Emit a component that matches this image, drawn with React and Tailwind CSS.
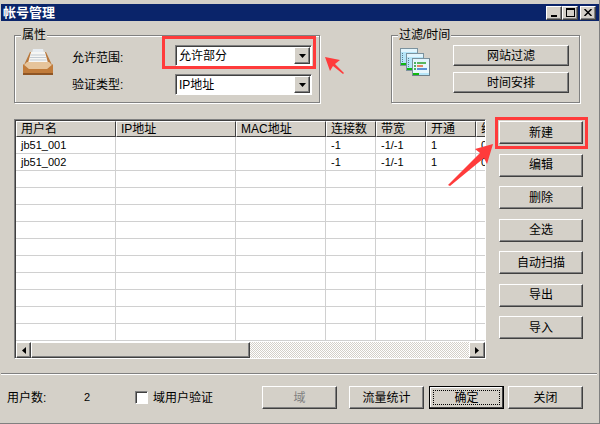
import React from "react";

const font = { fontFamily: '"Liberation Sans", "Noto Sans CJK SC", sans-serif' };

const raised =
  "flex items-center justify-center border border-t-white border-l-white border-r-[#404040] border-b-[#404040] shadow-[inset_-1px_-1px_0_#808080] bg-[#d4d0c8] text-[12px]";
const sunken =
  "border border-t-[#808080] border-l-[#808080] border-r-white border-b-white shadow-[inset_1px_1px_0_#404040]";

const columns = [
  { title: "用户名", width: "w-[100px]" },
  { title: "IP地址", width: "w-[120px]" },
  { title: "MAC地址", width: "w-[90px]" },
  { title: "连接数", width: "w-[50px]" },
  { title: "带宽", width: "w-[50px]" },
  { title: "开通", width: "w-[50px]" },
  { title: "线路", width: "w-[20px]" },
];

const rows = [
  ["jb51_001", "", "", "-1", "-1/-1", "1", "0"],
  ["jb51_002", "", "", "-1", "-1/-1", "1", "0"],
  ...Array.from({ length: 10 }, () => ["", "", "", "", "", "", ""]),
];

const sideButtons = ["新建", "编辑", "删除", "全选", "自动扫描", "导出", "导入"];

function Group({ title, className, children }) {
  return (
    <div className={`relative border border-[#808080] shadow-[1px_1px_0_#fff,inset_1px_1px_0_#fff] ${className}`}>
      <span className="absolute left-[6px] top-[-8px] bg-[#d4d0c8] px-[1px] text-[12px] leading-[15px]">
        {title}
      </span>
      {children}
    </div>
  );
}

function Combo({ value }) {
  return (
    <div className={`flex h-[21px] w-[137px] items-center bg-white pl-[3px] text-[12px] ${sunken}`}>
      <span className="flex-1 leading-none">{value}</span>
      <span className={`${raised} mr-[1px] h-[17px] w-[16px]`}>
        <svg width="7" height="4" viewBox="0 0 7 4">
          <path d="M0 0h7L3.500 4z" fill="#000" />
        </svg>
      </span>
    </div>
  );
}

function WinButton({ children, className }) {
  return <div className={`${raised} h-[14px] w-[16px] ${className}`}>{children}</div>;
}

function InboxIcon() {
  return (
    <svg width="30" height="27" viewBox="0 0 30 27">
      <path d="M1 17 L7 4 H10 L6 15 H24 L20 4 H23 L29 17z" fill="#b9783c" />
      <path d="M10 1 H20 L23 13 H7z" fill="#e8edf2" />
      <path d="M8 4 H22 L25 15 H5z" fill="#f6f6f4" />
      <path d="M7.500 7h15M7 9.500h16M6.500 12h17" stroke="#c3cbd3" />
      <path d="M4 14 H26 L29 17 L24 21 H6 L1 17z" fill="#e6c49b" />
      <path d="M0 16 L6 21 H24 L30 16 V26 H0z" fill="#c17b3a" />
      <path d="M0 25 H30 V27 H0z" fill="#8f5524" />
    </svg>
  );
}

function ListsIcon() {
  return (
    <svg width="30" height="28" viewBox="0 0 30 28">
      {[
        [0, 0],
        [6, 5],
        [12, 10],
      ].map(([x, y]) => (
        <g key={x} transform={`translate(${x} ${y})`}>
          <rect x="0.500" y="0.500" width="17" height="17" fill="#b5e5f8" stroke="#7b929e" />
          <rect x="1" y="1" width="16" height="3" fill="#e2f5fd" />
          <rect x="1" y="15" width="6" height="2" fill="#10b810" />
          <path d="M2.500 5v9" stroke="#5f7f90" strokeDasharray="1 1" />
        </g>
      ))}
      <rect x="13" y="14" width="16" height="11" fill="#e8f7fc" />
      <path d="M14 15h2M14 18h2M14 21h2" stroke="#1a9a30" strokeWidth="1.500" />
      <path d="M17 15h9" stroke="#2aa02a" strokeWidth="1.500" />
      <path d="M17 18h6" stroke="#e06030" strokeWidth="1.500" />
      <path d="M17 21h10" stroke="#2a70c8" strokeWidth="1.500" />
      <path d="M12.500 27.500h17V10.500" fill="none" stroke="#6f7f88" />
    </svg>
  );
}

function ScrollArrow({ dir, className }) {
  return (
    <div className={`${raised} h-[16px] shrink-0 ${className}`}>
      <svg width="4" height="7" viewBox="0 0 4 7">
        <path d={dir === "left" ? "M4 0v7L0 3.500z" : "M0 0v7l4-3.500z"} fill="#000" />
      </svg>
    </div>
  );
}

export default function App() {
  return (
    <div style={font} className="relative h-[424px] w-[600px] overflow-hidden border-b border-r border-[#808080] bg-[#d4d0c8] pl-[1px] pt-[1px] text-[12px] text-black">
      <div className="mr-[-1px] mt-[3px] flex h-[17px] items-center justify-between bg-[#0a246a] pl-[2px] pr-[4px]">
        <span className="text-[13px] font-bold leading-none text-white">帐号管理</span>
        <div className="flex items-center">
          <WinButton>
            <span className="mt-[6px] h-[2px] w-[6px] bg-black" />
          </WinButton>
          <WinButton>
            <span className="h-[9px] w-[9px] border border-t-2 border-black" />
          </WinButton>
          <WinButton className="ml-[2px]">
            <svg width="8" height="7" viewBox="0 0 8 7">
              <path d="M0.500 0 L7.500 7 M7.500 0 L0.500 7" stroke="#000" strokeWidth="1.500" />
            </svg>
          </WinButton>
        </div>
      </div>

      <div className="ml-[13px] mt-[14px] flex gap-[71px]">
        <Group title="属性" className="flex h-[68px] w-[306px]">
          <div className="ml-[8px] mt-[12px] shrink-0">
            <InboxIcon />
          </div>
          <div className="ml-[19px] mt-[9px] flex flex-col gap-[8px]">
            <div className="flex h-[21px] items-center">
              <span className="mt-[4px] w-[103px]">允许范围:</span>
              <Combo value="允许部分" />
            </div>
            <div className="flex h-[21px] items-center">
              <span className="w-[103px]">验证类型:</span>
              <Combo value="IP地址" />
            </div>
          </div>
        </Group>
        <Group title="过滤/时间" className="flex h-[68px] w-[189px]">
          <div className="ml-[8px] mt-[12px] shrink-0">
            <ListsIcon />
          </div>
          <div className="ml-[23px] mt-[9px] flex flex-col gap-[6px]">
            <div className={`${raised} h-[21px] w-[116px]`}>网站过滤</div>
            <div className={`${raised} h-[21px] w-[116px]`}>时间安排</div>
          </div>
        </Group>
      </div>

      <div className="ml-[13px] mt-[16px] flex">
        <div className={`flex h-[240px] w-[472px] flex-col overflow-hidden pl-[1px] pt-[1px] ${sunken}`}>
          <div className="flex h-[16px] shrink-0 overflow-hidden">
            {columns.map((c) => (
              <div
                key={c.title}
                className={`${c.width} flex shrink-0 items-center overflow-hidden border border-t-white border-l-white border-r-[#404040] border-b-[#404040] pl-[4px] leading-none whitespace-nowrap`}
              >
                {c.title}
              </div>
            ))}
          </div>
          <div className="flex-1 overflow-hidden bg-white">
            {rows.map((row, i) => (
              <div key={i} className="flex h-[17px] overflow-hidden border-b border-[#d0d0d0]">
                {row.map((cell, j) => (
                  <div
                    key={j}
                    className={`${columns[j].width} shrink-0 border-r border-[#d0d0d0] pl-[5px] text-[11px] leading-[17px]`}
                  >
                    {cell}
                  </div>
                ))}
              </div>
            ))}
          </div>
          <div className="flex h-[16px] shrink-0 bg-[repeating-conic-gradient(#ffffff_0_25%,#d4d0c8_0_50%)] bg-[length:2px_2px]">
            <ScrollArrow dir="left" className="w-[15px]" />
            <div className={`${raised} h-[16px] w-[219px]`} />
            <div className="flex-1" />
            <ScrollArrow dir="right" className="w-[16px]" />
          </div>
        </div>

        <div className="ml-[13px] mt-[2px] flex flex-col gap-[9.500px]">
          {sideButtons.map((b) => (
            <div key={b} className={`${raised} h-[23px] w-[84px]`}>
              {b}
            </div>
          ))}
        </div>
      </div>

      <div className="mt-[14px] h-[2px] w-[596px] border-t border-b border-t-[#808080] border-b-white" />

      <div className="ml-[6px] mt-[11px] flex h-[23px] items-center">
        <span className="w-[77px]">用户数:</span>
        <span className="w-[51px] text-[11px]">2</span>
        <span className={`h-[13px] w-[13px] bg-white ${sunken}`} />
        <span className="ml-[5px] w-[109px]">域用户验证</span>
        <div className={`${raised} h-[23px] w-[75px] text-[#808080]`}>域</div>
        <div className={`${raised} ml-[12px] h-[23px] w-[75px]`}>流量统计</div>
        <div className="ml-[5px] flex h-[23px] w-[75px] items-center justify-center border border-black shadow-[inset_-1px_-1px_0_#404040,inset_1px_1px_0_#fff]">
          <span className="flex h-[15px] w-[67px] items-center justify-center border border-dotted border-black">确定</span>
        </div>
        <div className={`${raised} ml-[4px] h-[23px] w-[75px]`}>关闭</div>
      </div>

      {/* red annotations over the dialog */}
      <div className="absolute left-[162px] top-[36px] h-[33px] w-[154px] border-[3px] border-[#ff3b3b]" />
      <div className="absolute left-[495px] top-[117px] h-[32px] w-[93px] border-[3px] border-[#ff3b3b]" />
      <svg className="absolute left-0 top-0" width="600" height="424" viewBox="0 0 600 424">
        <path d="M325 57 L340 60 L335 64 L344 73 L343 74 L333 66 L330 71z" fill="#ff3b3b" />
        <path d="M493 144 L475 149 L480 153 L448 185 L450 186 L484 158 L487 164z" fill="#ff3b3b" />
      </svg>
    </div>
  );
}
